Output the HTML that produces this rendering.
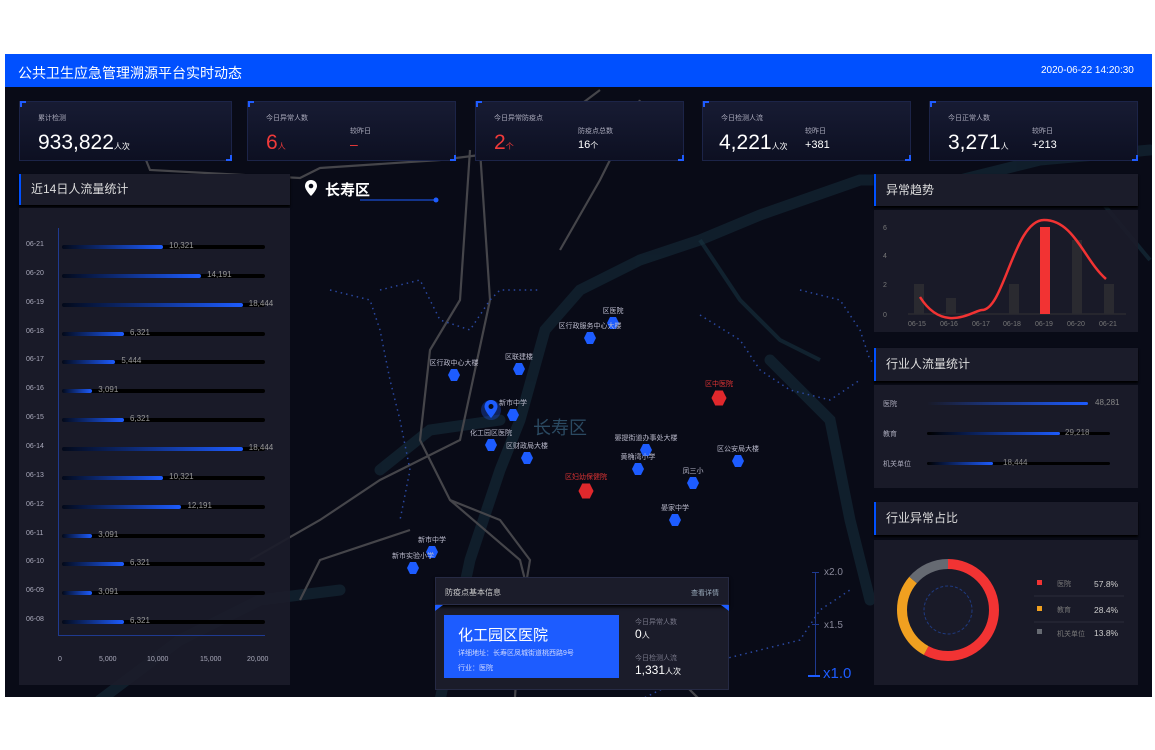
<!DOCTYPE html>
<html><head><meta charset="utf-8">
<style>
*{margin:0;padding:0;box-sizing:border-box}
body{width:1155px;height:750px;background:#fff;position:relative;overflow:hidden;font-family:"Liberation Sans","Noto Sans CJK SC",sans-serif;color:#ddd}
.a{position:absolute}
#dash{left:5px;top:54px;width:1147px;height:643px;background:#090b17;overflow:hidden}
.hdr{left:5px;top:54px;width:1147px;height:33px;background:#0050ff}
.card{background:linear-gradient(#171b33,#0d1022);border:1px solid #1c2448}
.card .c1{position:absolute;left:0;top:-1px;width:6px;height:6px;border-left:2px solid #1f5cff;border-top:2px solid #1f5cff}
.card .c2{position:absolute;right:-1px;bottom:-1px;width:6px;height:6px;border-right:2px solid #1f5cff;border-bottom:2px solid #1f5cff}
.sm{font-size:7px;color:#aab}
.big{font-size:21px;color:#fff}
.unit{font-size:8px}
.ph{background:#1b1c2a;border-left:2px solid #0050ff;font-size:12px;color:#ddd;padding-left:10px;line-height:30px;box-shadow:0 2px 2px #000}
.pb{background:rgba(27,28,42,.93)}
.lbl{font-size:7px;color:#aab}
.mp{font-size:7px;color:#bbc;white-space:nowrap;transform:translateX(-50%)}
.hex{width:12px;height:12px;background:#1d5cff;clip-path:polygon(25% 0,75% 0,100% 50%,75% 100%,25% 100%,0 50%);transform:translate(-50%,-50%)}
.hex.r{background:#e0282c;width:15px;height:15px;box-shadow:0 0 0 3px #6b1518}
</style></head><body>
<div class="a" id="dash">
<svg class="a" style="left:0;top:0" width="1147" height="643" viewBox="5 54 1147 643">
<g fill="none" stroke="#132633" stroke-width="11" stroke-linecap="round" opacity=".75">
<path d="M440 700 L470 560 L500 470 L520 420 L545 330 L580 290 L640 260 L700 240 L760 215 L860 180 L960 180"/>
<path d="M500 420 L430 430 L380 470"/>
<path d="M960 180 L1040 160 L1150 150"/>
<path d="M100 700 L180 640 L260 600 L340 590"/>
<path d="M770 360 L830 420 L850 520 L870 600"/>
</g>
<g fill="none" stroke="#183240" stroke-width="4" opacity=".6">
<path d="M700 240 L740 300 L780 340 L820 360"/>
<path d="M1100 200 L1150 260"/>
</g>
<g fill="none" stroke="#45454a" stroke-width="2.2">
<path d="M130 120 L150 170 L300 178 L320 168 L440 160 L520 150 L560 120 L600 90"/>
<path d="M470 150 L460 300 L430 350 L420 440 L450 500 L500 520 L530 560 L520 620 L515 697"/>
<path d="M480 150 L490 300 L460 440 L380 480 L320 520 L250 560"/>
<path d="M450 500 L520 560 L530 600 L600 620 L640 640 L700 700"/>
<path d="M410 530 L320 560 L300 600"/>
<path d="M640 100 L600 180 L560 250"/>
</g>
<g fill="none" stroke="#2a48a0" stroke-width="1.5" stroke-dasharray="1.5 4">
<path d="M380 290 L420 280 L440 320 L470 330 L490 300 L500 290 L540 290"/>
<path d="M330 290 L370 300 L380 330 L390 380 L400 420 L410 470 L400 520"/>
<path d="M800 290 L840 300 L860 330 L870 360 L900 380"/>
<path d="M700 315 L740 340 L760 370 L790 390 L830 400 L860 380"/>
<path d="M640 700 L720 660 L800 640 L820 610 L850 590"/>
</g>
<line x1="360" y1="200" x2="436" y2="200" stroke="#1d5cff" stroke-width="1"/>
<circle cx="436" cy="200" r="2.5" fill="#1d5cff"/>
</svg>
</div>
<div class="a hdr"></div>
<div class="a" style="left:18px;top:63px;font-size:14px;color:#fff">公共卫生应急管理溯源平台实时动态</div>
<div class="a" style="left:1041px;top:65px;font-size:10px;color:#fff">2020-06-22 14:20:30</div>

<div class="a card" style="left:19px;top:101px;width:213px;height:60px"><i class="c1"></i><i class="c2"></i>
<div class="a sm" style="left:18px;top:11px">累计检测</div>
<div class="a big" style="left:18px;top:29px">933,822<span class="unit">人次</span></div></div>
<div class="a card" style="left:247px;top:101px;width:209px;height:60px"><i class="c1"></i><i class="c2"></i>
<div class="a sm" style="left:18px;top:11px">今日异常人数</div>
<div class="a big" style="left:18px;top:29px;color:#f03a3a">6<span class="unit">人</span></div>
<div class="a sm" style="left:102px;top:24px">较昨日</div>
<div class="a" style="left:102px;top:34px;font-size:14px;color:#f03a3a">–</div></div>
<div class="a card" style="left:475px;top:101px;width:209px;height:60px"><i class="c1"></i><i class="c2"></i>
<div class="a sm" style="left:18px;top:11px">今日异常防疫点</div>
<div class="a big" style="left:18px;top:29px;color:#f03a3a">2<span class="unit">个</span></div>
<div class="a sm" style="left:102px;top:24px">防疫点总数</div>
<div class="a" style="left:102px;top:37px;font-size:11px;color:#fff">16<span class="unit">个</span></div></div>
<div class="a card" style="left:702px;top:101px;width:209px;height:60px"><i class="c1"></i><i class="c2"></i>
<div class="a sm" style="left:18px;top:11px">今日检测人流</div>
<div class="a big" style="left:16px;top:29px">4,221<span class="unit">人次</span></div>
<div class="a sm" style="left:102px;top:24px">较昨日</div>
<div class="a" style="left:102px;top:37px;font-size:11px;color:#fff">+381</div></div>
<div class="a card" style="left:929px;top:101px;width:209px;height:60px"><i class="c1"></i><i class="c2"></i>
<div class="a sm" style="left:18px;top:11px">今日正常人数</div>
<div class="a big" style="left:18px;top:29px">3,271<span class="unit">人</span></div>
<div class="a sm" style="left:102px;top:24px">较昨日</div>
<div class="a" style="left:102px;top:37px;font-size:11px;color:#fff">+213</div></div>

<div class="a ph" style="left:19px;top:174px;width:271px;height:31px">近14日人流量统计</div>
<div class="a pb" style="left:19px;top:208px;width:271px;height:477px"></div>
<div class="a" style="left:58px;top:228px;width:1px;height:408px;background:#1f3a90"></div>
<div class="a" style="left:58px;top:635px;width:207px;height:1px;background:#1f3a90"></div>
<div id="bars"></div>
<div class="a lbl" style="left:58px;top:656px">0</div>
<div class="a lbl" style="left:99px;top:656px">5,000</div>
<div class="a lbl" style="left:147px;top:656px">10,000</div>
<div class="a lbl" style="left:200px;top:656px">15,000</div>
<div class="a lbl" style="left:247px;top:656px">20,000</div>

<svg class="a" style="left:304px;top:179px" width="14" height="18" viewBox="0 0 14 18"><path d="M7 1C3.5 1 1 3.6 1 7c0 4 6 10 6 10s6-6 6-10c0-3.4-2.5-6-6-6z" fill="#fff"/><circle cx="7" cy="7" r="2.3" fill="#090b17"/></svg>
<div class="a" style="left:325px;top:179px;font-size:15px;color:#fff;font-weight:bold">长寿区</div>
<div class="a" style="left:533px;top:414px;font-size:18px;color:#2b4a62">长寿区</div>
<svg class="a" style="left:481px;top:398px" width="20" height="26" viewBox="0 0 20 26"><circle cx="10" cy="12" r="10" fill="#1d5cff" opacity=".3"/><path d="M10 2C6 2 3.5 5 3.5 8.5 3.5 13 10 20 10 20s6.5-7 6.5-11.5C16.5 5 14 2 10 2z" fill="#1d5cff"/><circle cx="10" cy="8.5" r="2.5" fill="#090b17"/></svg>
<div id="pts"></div>

<div class="a" style="left:815px;top:572px;width:1px;height:104px;background:#1f3a90"></div>
<div class="a" style="left:812px;top:572px;width:7px;height:1px;background:#1f3a90"></div>
<div class="a" style="left:812px;top:624px;width:7px;height:1px;background:#1f3a90"></div>
<div class="a" style="left:808px;top:675px;width:12px;height:2px;background:#1d5cff"></div>
<div class="a" style="left:824px;top:567px;font-size:10px;color:#889">x2.0</div>
<div class="a" style="left:824px;top:620px;font-size:10px;color:#889">x1.5</div>
<div class="a" style="left:823px;top:665px;font-size:15px;color:#1d5cff">x1.0</div>

<div class="a" style="left:435px;top:577px;width:294px;height:113px;background:#1b1c2a;border:1px solid #262a44"></div>
<div class="a" style="left:435px;top:577px;width:294px;height:28px;border-bottom:1px solid #2a2e4a;box-shadow:0 2px 3px #000"></div>
<div class="a" style="left:445px;top:587px;font-size:8px;color:#ccc">防疫点基本信息</div>
<div class="a" style="left:691px;top:588px;font-size:7px;color:#9ab">查看详情</div>
<div class="a" style="left:435px;top:605px;width:8px;height:6px;background:#1d5cff;clip-path:polygon(0 0,100% 0,0 100%)"></div>
<div class="a" style="left:721px;top:605px;width:8px;height:6px;background:#1d5cff;clip-path:polygon(0 0,100% 0,100% 100%)"></div>
<div class="a" style="left:444px;top:615px;width:175px;height:63px;background:#1d5cff"></div>
<div class="a" style="left:458px;top:624px;font-size:15px;color:#fff">化工园区医院</div>
<div class="a" style="left:458px;top:648px;font-size:7px;color:#cfd8ff">详细地址：长寿区凤城街道桃西路9号</div>
<div class="a" style="left:458px;top:663px;font-size:7px;color:#cfd8ff">行业：医院</div>
<div class="a" style="left:635px;top:617px;font-size:7px;color:#778">今日异常人数</div>
<div class="a" style="left:635px;top:627px;font-size:12px;color:#fff">0<span class="unit">人</span></div>
<div class="a" style="left:635px;top:653px;font-size:7px;color:#778">今日检测人流</div>
<div class="a" style="left:635px;top:663px;font-size:12px;color:#fff">1,331<span class="unit">人次</span></div>

<div class="a ph" style="left:874px;top:174px;width:264px;height:32px;line-height:32px">异常趋势</div>
<div class="a pb" style="left:874px;top:210px;width:264px;height:122px"></div>
<svg class="a" style="left:874px;top:210px" width="264" height="122">
<g fill="#777" font-size="7" font-family="Liberation Sans"><text x="9" y="20">6</text><text x="9" y="48">4</text><text x="9" y="77">2</text><text x="9" y="107">0</text>
<text x="34" y="116">06-15</text><text x="66" y="116">06-16</text><text x="98" y="116">06-17</text><text x="129" y="116">06-18</text><text x="161" y="116">06-19</text><text x="193" y="116">06-20</text><text x="225" y="116">06-21</text></g>
<line x1="34" y1="104" x2="252" y2="104" stroke="#333" stroke-width="1"/>
<g fill="#2a2a30"><rect x="40" y="74" width="10" height="30"/><rect x="72" y="88" width="10" height="16"/><rect x="135" y="74" width="10" height="30"/><rect x="198" y="30" width="10" height="74"/><rect x="230" y="74" width="10" height="30"/></g>
<rect x="166" y="17" width="10" height="87" fill="#f23333"/>
<path d="M46 87 C70 125 100 100 108 100 C130 100 140 10 170 10 C200 10 210 50 232 69" fill="none" stroke="#f23333" stroke-width="2.5"/>
</svg>
<div class="a ph" style="left:874px;top:348px;width:264px;height:33px;line-height:33px">行业人流量统计</div>
<div class="a pb" style="left:874px;top:385px;width:264px;height:103px"></div>
<div class="a lbl" style="left:883px;top:399px">医院</div>
<div class="a lbl" style="left:883px;top:429px">教育</div>
<div class="a lbl" style="left:883px;top:459px">机关单位</div>
<div class="a" style="left:927px;top:432px;width:183px;height:3px;background:#000;border-radius:2px"></div>
<div class="a" style="left:927px;top:462px;width:183px;height:3px;background:#000;border-radius:2px"></div>
<div class="a" style="left:927px;top:402px;width:161px;height:3px;background:linear-gradient(90deg,rgba(29,92,255,0),#1d5cff);border-radius:2px"></div>
<div class="a" style="left:927px;top:432px;width:133px;height:3px;background:linear-gradient(90deg,rgba(29,92,255,0),#1d5cff);border-radius:2px"></div>
<div class="a" style="left:927px;top:462px;width:66px;height:3px;background:linear-gradient(90deg,rgba(29,92,255,0),#1d5cff);border-radius:2px"></div>
<div class="a" style="left:1095px;top:398px;font-size:8px;color:#888">48,281</div>
<div class="a" style="left:1065px;top:428px;font-size:8px;color:#888">29,218</div>
<div class="a" style="left:1003px;top:458px;font-size:8px;color:#888">18,444</div>

<div class="a ph" style="left:874px;top:502px;width:264px;height:33px;line-height:33px">行业异常占比</div>
<div class="a pb" style="left:874px;top:540px;width:264px;height:145px"></div>
<svg class="a" style="left:874px;top:540px" width="264" height="145">
<g transform="translate(74,70) rotate(-90)" fill="none" stroke-width="10">
<circle r="46" stroke="#f23333" stroke-dasharray="167 289"/>
<circle r="46" stroke="#f0a020" stroke-dasharray="0 167 82 289"/>
<circle r="46" stroke="#666a72" stroke-dasharray="0 249 40 289"/>
</g>
<circle cx="74" cy="70" r="24" fill="none" stroke="#1f3a80" stroke-width="1" stroke-dasharray="3 2"/>
<rect x="163" y="40" width="5" height="5" fill="#f23333"/><rect x="163" y="66" width="5" height="5" fill="#f0a020"/><rect x="163" y="89" width="5" height="5" fill="#666a72"/>
<g font-family="Liberation Sans,Noto Sans CJK SC,sans-serif" font-size="7" fill="#777"><text x="183" y="46">医院</text><text x="183" y="72">教育</text><text x="183" y="96">机关单位</text></g>
<g font-family="Liberation Sans" font-size="8.5" fill="#ccc"><text x="220" y="47">57.8%</text><text x="220" y="73">28.4%</text><text x="220" y="96">13.8%</text></g>
<line x1="160" y1="56" x2="250" y2="56" stroke="#2a2c3a"/><line x1="160" y1="82" x2="250" y2="82" stroke="#2a2c3a"/>
</svg>

<script>
var d=[["06-21",10321],["06-20",14191],["06-19",18444],["06-18",6321],["06-17",5444],["06-16",3091],["06-15",6321],["06-14",18444],["06-13",10321],["06-12",12191],["06-11",3091],["06-10",6321],["06-09",3091],["06-08",6321]];
var h="";d.forEach(function(r,i){var y=245+i*28.85,w=r[1]/20000*196;
h+='<div class="a lbl" style="left:26px;top:'+(y-4)+'px">'+r[0]+'</div>';
h+='<div class="a" style="left:62px;top:'+y+'px;width:203px;height:4px;background:#000;border-radius:2px"></div>';
h+='<div class="a" style="left:62px;top:'+y+'px;width:'+w+'px;height:4px;background:linear-gradient(90deg,rgba(29,92,255,0.1),#1d5cff);border-radius:2px"></div>';
h+='<div class="a" style="left:'+(68+w)+'px;top:'+(y-4)+'px;font-size:8px;color:#999">'+r[1].toLocaleString("en-US")+'</div>';});
document.getElementById("bars").innerHTML=h;
var p=[["区医院",613,323,0],["区行政服务中心大楼",590,338,0],["区联建楼",519,369,0],["区行政中心大楼",454,375,0],["新市中学",513,415,0],["化工园区医院",491,445,0],["区财政局大楼",527,458,0],["区中医院",719,398,1],["晏提街道办事处大楼",646,450,0],["黄桷湾小学",638,469,0],["区公安局大楼",738,461,0],["凤三小",693,483,0],["区妇幼保健院",586,491,1],["晏家中学",675,520,0],["新市中学",432,552,0],["新市实验小学",413,568,0]];
h="";p.forEach(function(q){h+='<div class="a mp" style="left:'+q[1]+'px;top:'+(q[2]-(q[3]?19:17))+'px;'+(q[3]?'color:#d33':'')+'">'+q[0]+'</div><div class="a hex'+(q[3]?' r':'')+'" style="left:'+q[1]+'px;top:'+q[2]+'px"></div>';});
document.getElementById("pts").innerHTML=h;
</script>
</body></html>
